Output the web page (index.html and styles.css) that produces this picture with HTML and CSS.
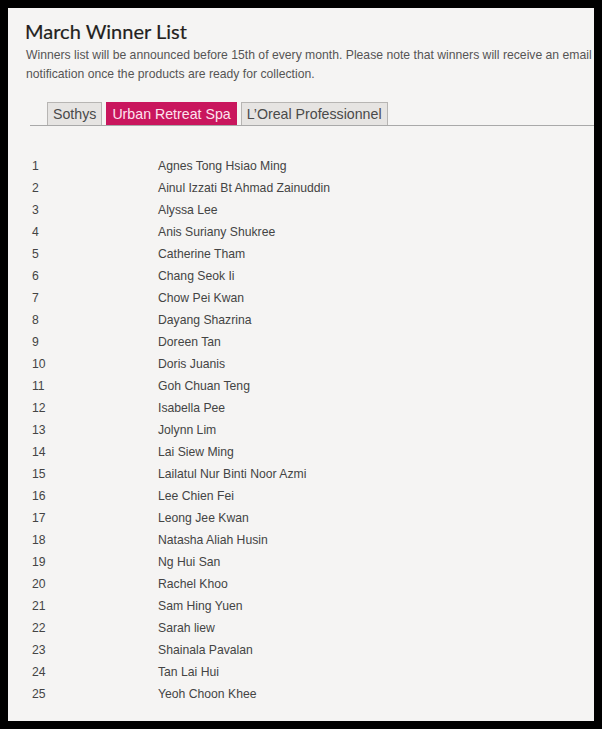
FILE: index.html
```html
<!DOCTYPE html>
<html>
<head>
<meta charset="utf-8">
<link rel="stylesheet" href="styles.css">
</head>
<body>
<div class="page">
  <h1 class="title">March Winner List</h1>
  <p class="intro">Winners list will be announced before 15th of every month. Please note that winners will receive an email notification once the products are ready for collection.</p>
  <div class="tabs">
    <span class="tab">Sothys</span>
    <span class="tab active">Urban Retreat Spa</span>
    <span class="tab">L’Oreal Professionnel</span>
  </div>
  <ol class="list">
    <li><span class="num">1</span><span class="name">Agnes Tong Hsiao Ming</span></li>
    <li><span class="num">2</span><span class="name">Ainul Izzati Bt Ahmad Zainuddin</span></li>
    <li><span class="num">3</span><span class="name">Alyssa Lee</span></li>
    <li><span class="num">4</span><span class="name">Anis Suriany Shukree</span></li>
    <li><span class="num">5</span><span class="name">Catherine Tham</span></li>
    <li><span class="num">6</span><span class="name">Chang Seok Ii</span></li>
    <li><span class="num">7</span><span class="name">Chow Pei Kwan</span></li>
    <li><span class="num">8</span><span class="name">Dayang Shazrina</span></li>
    <li><span class="num">9</span><span class="name">Doreen Tan</span></li>
    <li><span class="num">10</span><span class="name">Doris Juanis</span></li>
    <li><span class="num">11</span><span class="name">Goh Chuan Teng</span></li>
    <li><span class="num">12</span><span class="name">Isabella Pee</span></li>
    <li><span class="num">13</span><span class="name">Jolynn Lim</span></li>
    <li><span class="num">14</span><span class="name">Lai Siew Ming</span></li>
    <li><span class="num">15</span><span class="name">Lailatul Nur Binti Noor Azmi</span></li>
    <li><span class="num">16</span><span class="name">Lee Chien Fei</span></li>
    <li><span class="num">17</span><span class="name">Leong Jee Kwan</span></li>
    <li><span class="num">18</span><span class="name">Natasha Aliah Husin</span></li>
    <li><span class="num">19</span><span class="name">Ng Hui San</span></li>
    <li><span class="num">20</span><span class="name">Rachel Khoo</span></li>
    <li><span class="num">21</span><span class="name">Sam Hing Yuen</span></li>
    <li><span class="num">22</span><span class="name">Sarah liew</span></li>
    <li><span class="num">23</span><span class="name">Shainala Pavalan</span></li>
    <li><span class="num">24</span><span class="name">Tan Lai Hui</span></li>
    <li><span class="num">25</span><span class="name">Yeoh Choon Khee</span></li>
  </ol>
</div>
</body>
</html>
```

FILE: styles.css
```css
html, body {
  margin: 0;
  padding: 0;
  background: #000;
}
body {
  padding: 8px;
  height: 729px;
  box-sizing: border-box;
  overflow: hidden;
}
.page {
  background: #f5f4f3;
  height: 713px;
  overflow: hidden;
  padding: 0 0 0 17px;
  box-sizing: border-box;
}
.title {
  margin: 0;
  padding-top: 11px;
  font-family: Lato, "DejaVu Sans", sans-serif;
  font-weight: 400;
  font-size: 20px;
  line-height: 25px;
  color: #231f1d;
  -webkit-text-stroke: 0.2px #231f1d;
}
.intro {
  margin: 2px 0 0 1px;
  font-family: "Liberation Sans", Arial, sans-serif;
  font-size: 12.2px;
  line-height: 19px;
  color: #555;
  width: 600px;
}
.tabs {
  display: flex;
  gap: 4px;
  margin: 18px 0 0 5px;
  padding-left: 17px;
  border-bottom: 1px solid #a9a9a9;
}
.tab {
  font-family: "Liberation Sans", Arial, sans-serif;
  font-size: 14.2px;
  line-height: 22px;
  padding: 0 5px;
  background: #e6e4e2;
  border: 1px solid #b7b5b3;
  border-bottom: none;
  color: #4a4a4a;
}
.tab.active {
  background: #c9165d;
  border-color: #c9165d;
  color: #fde3ee;
}
.list {
  list-style: none;
  margin: 29px 0 0 0;
  padding: 0 0 0 7px;
  font-family: "Liberation Sans", Arial, sans-serif;
  font-size: 12.2px;
  color: #444;
}
.list li {
  display: grid;
  grid-template-columns: 126px 1fr;
  height: 22px;
  line-height: 22px;
}
```
